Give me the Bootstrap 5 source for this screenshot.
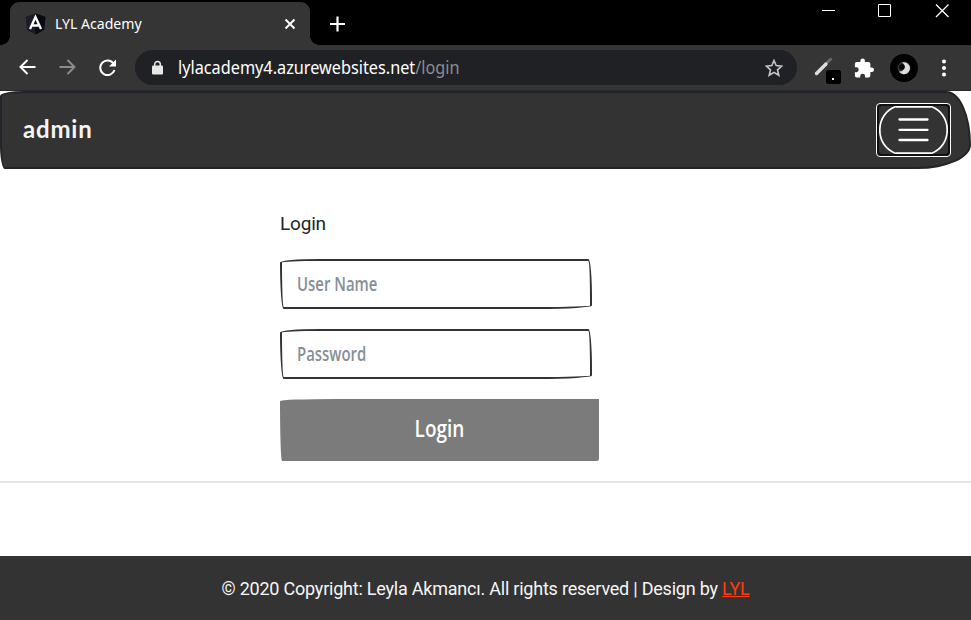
<!DOCTYPE html>
<html lang="en">
<head>
<meta charset="utf-8">
<meta name="viewport" content="width=device-width, initial-scale=1">
<title>LYL Academy</title>
<link href="https://cdn.jsdelivr.net/npm/bootstrap@5.3.0/dist/css/bootstrap.min.css" rel="stylesheet">
<style>
body{width:971px;height:620px;overflow:hidden;background:#fff;font-family:"Noto Sans","Open Sans",sans-serif}
svg{display:block;flex:none}
.fit{display:inline-block;white-space:nowrap;transform-origin:0 50%}
.titlebar{height:45px;background:#000;color:#fff}
.tab{width:300px;height:43px;margin:2px 0 0 10px;background:#353535;border-radius:9px 9px 0 0;padding:0 14px 0 15px;position:relative}
.tab::before,.tab::after{content:"";position:absolute;bottom:0;width:9px;height:9px}
.tab::before{left:-9px;background:radial-gradient(circle at 0 0,transparent 8.5px,#353535 9px)}
.tab::after{right:-9px;background:radial-gradient(circle at 100% 0,transparent 8.5px,#353535 9px)}
.tab-title{font-size:15px;margin-left:9px;transform:scaleX(.94)}
.toolbar{height:46px;background:#353535;border-bottom:1px solid #292b2d}
.address{width:662px;height:35px;background:#202124;border-radius:18px;margin:5px 0 0 18px;padding:0 14px 0 17px;color:#fff}
.url{font-size:18px;margin-left:15px;transform:scaleX(.903)}
.url span{color:#8b8e91}
.avatar{width:28px;height:28px;border-radius:50%;background:#000;margin-left:16px}
.site-nav{height:78px;background:#333;border:2px solid #212529;border-radius:25px 25px 55px 5px/5px 55px 25px 25px;padding:0 18px 0 21px}
.brand{font:700 24px/1 Lato,sans-serif;color:#f4f4f4;letter-spacing:.8px;margin-top:-2px}
.menu-ring{width:75px;height:54px;border:1px solid #fff;border-radius:4px;background:#101010;padding:2px;margin-top:-1px}
.menu-btn{width:69px;height:48px;background:#333;border:0;border-radius:3px;padding:0}
.login-form{width:319px;margin-left:280px;padding-top:42px}
.login-title{font:19px/26px Roboto,sans-serif;color:#212529;letter-spacing:-.2px;margin-bottom:22px}
.sketch-field{width:312px;height:50px;border:2px solid #333;border-radius:55px 5px 75px 5px/5px 55px 5px 65px;padding:0 0 0 15px;margin-bottom:20px;color:#868e96}
.sketch-text{font-family:"Open Sans",sans-serif;font-weight:600;font-size:20px;transform:scaleX(.745)}
.sketch-btn{width:319px;height:62px;background:#7b7b7b;color:#fff;border:0;border-radius:55px 0 2px 2px/2px 0 3px 60px;padding:0 1px 4px 0}
.sketch-btn .sketch-text{font-size:24px;font-weight:600;transform-origin:50% 50%;transform:scaleX(.79)}
.sketch-btn:hover{background:#7b7b7b;color:#fff}
.divider{height:2px;background:#e5e5e5;margin-top:20px}
.site-footer{height:64px;margin-top:73px;padding-top:2px;background:#333;color:#f6f6f6;font:18px/1 Roboto,sans-serif;letter-spacing:-.22px}
.site-footer a{color:#ff3c0b}
</style>
<script src="https://cdn.jsdelivr.net/npm/bootstrap@5.3.0/dist/js/bootstrap.bundle.min.js"></script>
</head>
<body>
<header>
  <div class="titlebar d-flex">
    <div class="tab d-flex align-items-center">
      <svg width="21" height="22" viewBox="0 0 21 22"><path d="M10.500.5 20.500 4 19 17l-8.500 4.500L2 17 .5 4z" fill="#1b1c27"/><path d="M10.500.5 20.500 4 19 17l-8.500 4.500z" fill="#070a12"/><path d="M5 16 10.500 4 16 16M7 12.500h7" fill="none" stroke="#fff" stroke-width="2.300"/></svg>
      <span class="fit tab-title">LYL Academy</span>
      <svg class="ms-auto" width="12" height="12" viewBox="0 0 12 12"><path d="m1.500 1.500 9 9m0-9-9 9" stroke="#fff" stroke-width="1.900"/></svg>
    </div>
    <svg width="16" height="16" style="margin:16px 0 0 19px" viewBox="0 0 16 16"><path d="M8.500.5v15M1 8h15" stroke="#fff" stroke-width="2.200"/></svg>
    <svg class="ms-auto" width="149" height="24" viewBox="0 0 149 24" fill="none" stroke="#fff"><path d="M0 10.500h13M56.500 4.500h12v12h-12z"/><path d="m114 4.500 12.500 12.500m0-12.500L114 17" stroke-width="1.300"/></svg>
  </div>
  <div class="toolbar d-flex">
    <svg width="117" height="45" viewBox="0 0 117 45" fill="none" stroke-width="2"><path d="M35.500 22h-15m7-7-7 7 7 7" stroke="#fff"/><path d="M59.500 22h15m-7-7 7 7-7 7" stroke="#8c8c8c"/><path d="M113.500 18.500a7.300 7.300 0 1 0 1 6.500" stroke="#fff"/><path d="M116 14.500v7h-7z" fill="#fff"/></svg>
    <div class="address d-flex align-items-center">
      <svg width="11" height="15" viewBox="0 0 11 15"><path d="M2.700 6V4.200a2.800 2.800 0 0 1 5.600 0V6" fill="none" stroke="#e8e8e8" stroke-width="1.500"/><rect y="5.500" width="11" height="9" rx="1.300" fill="#e8e8e8"/></svg>
      <span class="fit url">lylacademy4.azurewebsites.net<span>/login</span></span>
      <svg class="ms-auto" width="18" height="18" viewBox="0 0 18 18"><path d="m9 1.500 2.200 5.100 5.500.5-4.200 3.700 1.300 5.500L9 13.400l-4.800 2.900 1.300-5.500-4.200-3.700 5.500-.5z" fill="none" stroke="#c5c6c8" stroke-width="1.600"/></svg>
    </div>
    <div class="d-flex align-items-center">
      <svg width="30" height="32" viewBox="0 0 30 32" style="margin-left:16px"><path d="m12 12.500 6.500-6" stroke="#6b6b6b" stroke-width="3"/><path d="m3.500 21.500 9.500-9.500" stroke="#ddd" stroke-width="3.300" stroke-linecap="round"/><rect x="13" y="18" width="15" height="14" rx="2.500" fill="#000"/><path d="M19 26h2v2h-2z" fill="#fff"/></svg>
      <svg width="20" height="20" viewBox="0 0 22 22" style="margin-left:11px"><path d="M19.500 10.500H18v-4a2 2 0 0 0-2-2h-4V3a2.500 2.500 0 0 0-5 0v1.500H3a2 2 0 0 0-2 2v3.800h1.500a2.700 2.700 0 0 1 0 5.400H1V19.500a2 2 0 0 0 2 2h3.800V20a2.700 2.700 0 0 1 5.400 0v1.500H16a2 2 0 0 0 2-2v-4h1.500a2.500 2.500 0 0 0 0-5z" fill="#fff"/></svg>
      <div class="avatar d-flex align-items-center justify-content-center"><svg width="14" height="14" viewBox="0 0 14 14"><circle cx="7" cy="7" r="6.500" fill="#333"/><path d="M5 1.500a6 6 0 1 1-3 9 4.500 4.500 0 0 0 5-3.500A4.500 4.500 0 0 0 5 1.500z" fill="#ddd"/><circle cx="5" cy="6" r="2.800" fill="#000"/></svg></div>
      <svg width="6" height="18" viewBox="0 0 6 18" style="margin-left:23px" fill="#fff"><circle cx="3" cy="2.500" r="2"/><circle cx="3" cy="9" r="2"/><circle cx="3" cy="15.500" r="2"/></svg>
    </div>
  </div>
</header>
<nav class="site-nav d-flex align-items-center justify-content-between">
  <span class="brand">admin</span>
  <div class="menu-ring">
    <button class="menu-btn d-block" type="button" aria-label="Menu"><svg width="69" height="48" viewBox="0 0 69 48" fill="none" stroke="#fff" stroke-width="1.700"><path d="M17 .5C7 4 .8 13 .8 24S7 44 17 47.500M52 .5C62 4 68.200 13 68.200 24S62 44 52 47.500M17 .8h35M17 47.200h35"/><path d="M20.500 13.500h28m-28 10.300h28m-28 10.200h28" stroke-width="2.300" stroke-linecap="round"/></svg></button>
  </div>
</nav>
<main>
  <form class="login-form">
    <div class="login-title">Login</div>
    <div class="sketch-field d-flex align-items-center"><span class="fit sketch-text">User Name</span></div>
    <div class="sketch-field d-flex align-items-center"><span class="fit sketch-text">Password</span></div>
    <button class="btn sketch-btn d-flex align-items-center justify-content-center" type="button"><span class="fit sketch-text">Login</span></button>
  </form>
  <div class="divider"></div>
</main>
<footer class="site-footer d-flex align-items-center justify-content-center"><span class="text-nowrap">© 2020 Copyright: Leyla Akmancı. All rights reserved | Design by <a href="#">LYL</a></span></footer>
</body>
</html>
